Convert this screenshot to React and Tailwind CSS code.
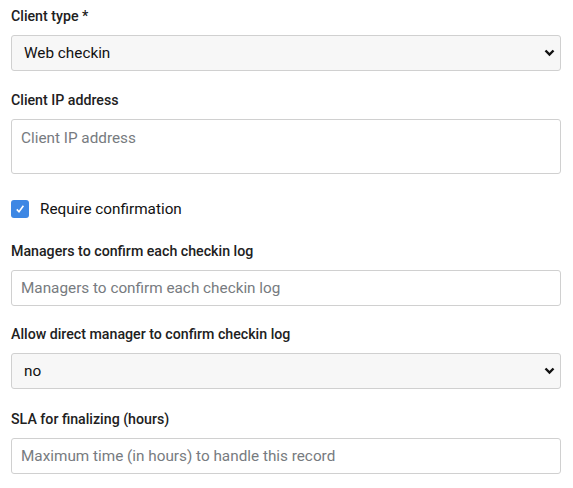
import { useState } from "react";

function Label({ children }) {
  return (
    <div className="h-5 mb-[9px] text-[14.2px] leading-5 font-medium text-[#212121]">
      {children}
    </div>
  );
}

function Chevron() {
  return (
    <svg
      className="pointer-events-none absolute right-[6px] top-1/2 -translate-y-1/2"
      width="11"
      height="8"
      viewBox="0 0 11 8"
    >
      <path d="M1.5 1.5 L5.5 5.5 L9.5 1.5" fill="none" stroke="#111" strokeWidth="2.4" />
    </svg>
  );
}

function SelectField({ label, value, options }) {
  return (
    <div className="mb-[19px]">
      <Label>{label}</Label>
      <div className="relative">
        <select
          defaultValue={value}
          className="appearance-none block w-full h-9 rounded-[3px] border border-[#d0d0d0] bg-[#f7f7f7] pl-3 pr-6 text-[15.3px] text-[#111] outline-none"
        >
          {options.map((o) => (
            <option key={o}>{o}</option>
          ))}
        </select>
        <Chevron />
      </div>
    </div>
  );
}

function TextField({ label, placeholder }) {
  return (
    <div className="mb-[18px]">
      <Label>{label}</Label>
      <input
        placeholder={placeholder}
        className="block w-full h-9 rounded-[3px] border border-[#d0d0d0] bg-white px-[9px] text-[15.3px] text-[#111] placeholder:text-[#777b80] outline-none"
      />
    </div>
  );
}

export default function App() {
  const [confirm, setConfirm] = useState(true);

  return (
    <div className="w-[573px] h-[488px] bg-white pl-[11px] pr-[12px] pt-[6px] font-['Roboto',sans-serif]">
      <SelectField label="Client type *" value="Web checkin" options={["Web checkin", "Mobile app"]} />

      <div>
        <Label>Client IP address</Label>
        <textarea
          placeholder="Client IP address"
          className="block w-full h-[55px] resize-none rounded-[3px] border border-[#d0d0d0] bg-white px-[9px] pt-[7px] text-[15.3px] text-[#111] placeholder:text-[#777b80] outline-none"
        />
      </div>

      <label className="flex items-center h-5 mt-[25px] mb-[22px] cursor-pointer">
        <input
          type="checkbox"
          checked={confirm}
          onChange={() => setConfirm(!confirm)}
          className="sr-only"
        />
        <span
          className={
            confirm
              ? "flex items-center justify-center w-[18px] h-[18px] rounded-[3px] bg-[#3d87e4]"
              : "flex items-center justify-center w-[18px] h-[18px] rounded-[3px] border border-[#999] bg-white"
          }
        >
          {confirm && (
            <svg width="10" height="10" viewBox="0 0 10 10">
              <path d="M1.8 5.4 L4 7.8 L8.4 1.8" fill="none" stroke="#fff" strokeWidth="1.6" />
            </svg>
          )}
        </span>
        <span className="ml-[11px] text-[15.3px] text-[#111]">Require confirmation</span>
      </label>

      <TextField
        label="Managers to confirm each checkin log"
        placeholder="Managers to confirm each checkin log"
      />
      <div className="mb-[20px]">
        <Label>Allow direct manager to confirm checkin log</Label>
        <div className="relative">
          <select
            defaultValue="no"
            className="appearance-none block w-full h-9 rounded-[3px] border border-[#d0d0d0] bg-[#f7f7f7] pl-3 pr-6 text-[15.3px] text-[#111] outline-none"
          >
            <option>no</option>
            <option>yes</option>
          </select>
          <Chevron />
        </div>
      </div>
      <TextField
        label="SLA for finalizing (hours)"
        placeholder="Maximum time (in hours) to handle this record"
      />
    </div>
  );
}
